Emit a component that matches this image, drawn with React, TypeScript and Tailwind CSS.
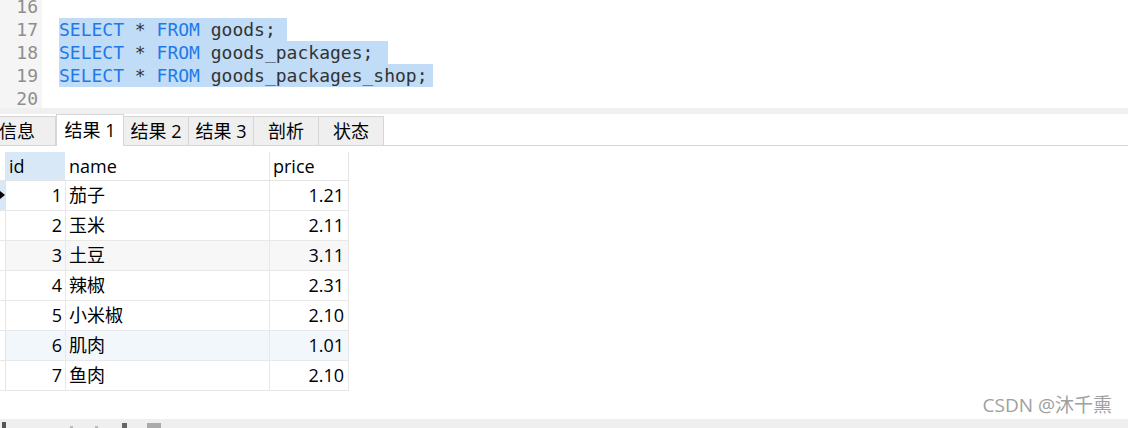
import React from 'react'

const codeLines = [
	{ n: 16, kw: false, text: '', sel: 0 },
	{ n: 17, kw: true, text: 'goods;', sel: 228 },
	{ n: 18, kw: true, text: 'goods_packages;', sel: 329 },
	{ n: 19, kw: true, text: 'goods_packages_shop;', sel: 374 },
	{ n: 20, kw: false, text: '', sel: 0 }
]

const tabs = ['信息', '结果 1', '结果 2', '结果 3', '剖析', '状态']

const rows = [
	{ id: 1, name: '茄子', price: '1.21' },
	{ id: 2, name: '玉米', price: '2.11' },
	{ id: 3, name: '土豆', price: '3.11' },
	{ id: 4, name: '辣椒', price: '2.31' },
	{ id: 5, name: '小米椒', price: '2.10' },
	{ id: 6, name: '肌肉', price: '1.01' },
	{ id: 7, name: '鱼肉', price: '2.10' }
]

const ui = { fontFamily: '"Open Sans", "Noto Sans CJK SC", sans-serif' }
const mono = { fontFamily: '"DejaVu Sans Mono", "Liberation Mono", monospace' }

function Editor() {
	return (
		<div className="flex h-[108px] overflow-hidden bg-white">
			<div className="w-[42px] bg-[#f5f5f5]">
				<div className="-mt-[5px]">
					{codeLines.map(l => (
						<div
							key={l.n}
							style={mono}
							className="h-[23px] leading-[23px] pr-[4px] text-right text-[18px] text-[#8e8e8e]">
							{l.n}
						</div>
					))}
				</div>
			</div>
			<div className="flex-1 pl-[17px]">
				<div className="-mt-[5px]">
					{codeLines.map(l => (
						<div key={l.n} className="relative h-[23px]">
							{l.sel > 0 && (
								<div
									className="absolute left-0 top-0 h-[23px] bg-[#c0dcf7]"
									style={{ width: l.sel }}></div>
							)}
							{l.kw && (
								<div
									style={mono}
									className="relative whitespace-pre leading-[23px] text-[18px] text-[#333]">
									<span className="text-[#1f7ae8]">SELECT</span> *{' '}
									<span className="text-[#1f7ae8]">FROM</span> {l.text}
								</div>
							)}
						</div>
					))}
				</div>
			</div>
		</div>
	)
}

function Tabs() {
	return (
		<div style={ui} className="flex h-[32px] border-b border-[#d6d6d6] bg-white">
			{tabs.map((t, i) =>
				i === 1 ? (
					<div
						key={t}
						className="-mb-px flex h-[32px] w-[68px] items-center justify-center border-x border-t border-[#d6d6d6] bg-white text-[18px] text-black">
						{t}
					</div>
				) : (
					<div
						key={t}
						className={`mt-[2px] flex h-[29px] items-center border-r border-t border-[#d6d6d6] bg-[#efefef] text-[18px] text-black ${
							i === 0 ? 'w-[57px] justify-start -ml-[1px]' : 'w-[65px] justify-center'
						}`}>
						{t}
					</div>
				)
			)}
		</div>
	)
}

function Grid() {
	return (
		<div style={ui} className="mt-[6px] w-[349px] text-[18px] text-black">
			<div className="flex h-[29px] border-b border-[#e4e4e4]">
				<div className="w-[6px] border-r border-[#e4e4e4] bg-white"></div>
				<div className="flex w-[60px] items-center border-r border-white bg-[#d9e8f7] pl-[3px]">
					id
				</div>
				<div className="flex w-[204px] items-center border-r border-[#e4e4e4] pl-[3px]">name</div>
				<div className="flex w-[79px] items-center border-r border-[#e4e4e4] pl-[3px]">price</div>
			</div>
			{rows.map((r, i) => {
				const bg = i === 2 ? 'bg-[#f7f7f7]' : i === 5 ? 'bg-[#f2f7fc]' : 'bg-white'
				return (
					<div key={r.id} className={`flex h-[30px] border-b border-[#e8e8e8] ${bg}`}>
						<div
							className={`relative w-[6px] border-r border-[#e4e4e4] ${
								i === 0 ? 'bg-[#d9e8f7]' : 'bg-white'
							}`}>
							{i === 0 && (
								<div className="absolute left-0 top-[10px] h-0 w-0 border-y-[4px] border-l-[5px] border-y-transparent border-l-black"></div>
							)}
						</div>
						<div className="flex w-[60px] items-center justify-end border-r border-[#e8e8e8] pr-[3px]">
							{r.id}
						</div>
						<div className="flex w-[204px] items-center border-r border-[#e8e8e8] pl-[3px]">
							{r.name}
						</div>
						<div className="flex w-[79px] items-center justify-end border-r border-[#e8e8e8] pr-[4px]">
							{r.price}
						</div>
					</div>
				)
			})}
		</div>
	)
}

export default function App() {
	return (
		<div className="relative flex h-[428px] w-[1128px] flex-col overflow-hidden bg-white">
			<Editor />
			<div className="h-[6px] bg-[#f0f0f0]"></div>
			<Tabs />
			<Grid />
			<div className="mt-auto flex h-[9px] items-end bg-[#efefef]">
				<div className="ml-[2px] h-[6px] w-[4px] bg-[#555]"></div>
				<div className="ml-[64px] h-[2px] w-[3px] bg-[#bbb]"></div>
				<div className="ml-[22px] h-[2px] w-[3px] bg-[#bbb]"></div>
				<div className="ml-[24px] h-[5px] w-[5px] bg-[#666]"></div>
				<div className="ml-[20px] h-[5px] w-[14px] bg-[#aaa]"></div>
			</div>
			<div
				style={ui}
				className="absolute right-[16px] bottom-[9px] text-[19px] text-[#a0a0a0] [text-shadow:1px_1px_0_#fff]">
				CSDN @沐千熏
			</div>
		</div>
	)
}
